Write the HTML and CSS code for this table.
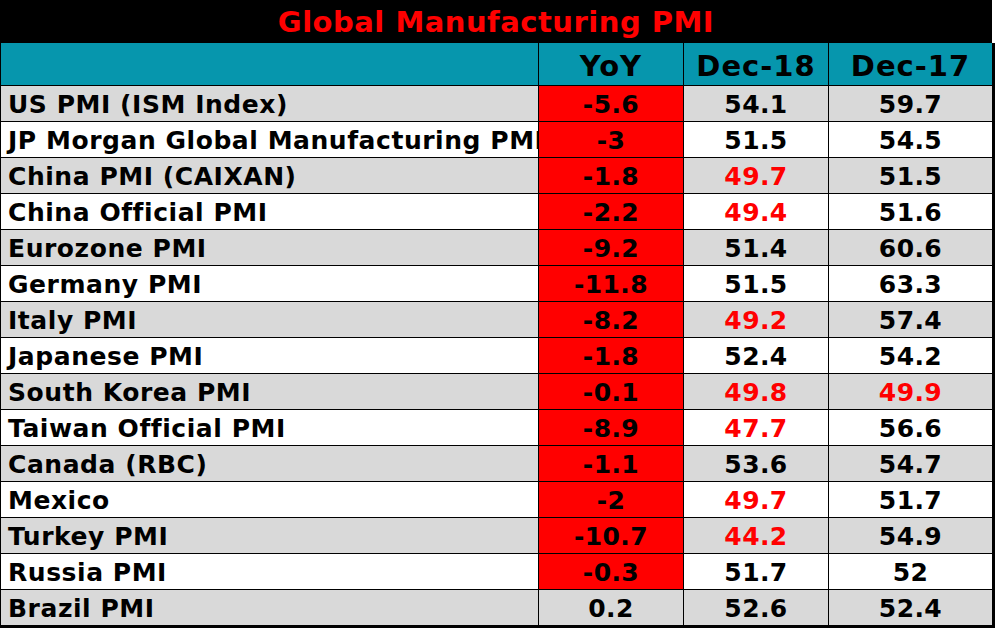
FILE: index.html
```html
<!DOCTYPE html>
<html>
<head>
<meta charset="utf-8">
<link rel="stylesheet" href="styles.css">
</head>
<body>
<div class="sheet">
  <div class="title">Global Manufacturing PMI</div>
  <div class="grid">
    <div class="hd"></div><div class="hd">YoY</div><div class="hd">Dec-18</div><div class="hd">Dec-17</div>

    <div class="nm g">US PMI (ISM Index)</div><div class="v neg">-5.6</div><div class="v g">54.1</div><div class="v g">59.7</div>
    <div class="nm">JP Morgan Global Manufacturing PMI</div><div class="v neg">-3</div><div class="v">51.5</div><div class="v">54.5</div>
    <div class="nm g">China PMI (CAIXAN)</div><div class="v neg">-1.8</div><div class="v g r">49.7</div><div class="v g">51.5</div>
    <div class="nm">China Official PMI</div><div class="v neg">-2.2</div><div class="v r">49.4</div><div class="v">51.6</div>
    <div class="nm g">Eurozone PMI</div><div class="v neg">-9.2</div><div class="v g">51.4</div><div class="v g">60.6</div>
    <div class="nm">Germany PMI</div><div class="v neg">-11.8</div><div class="v">51.5</div><div class="v">63.3</div>
    <div class="nm g">Italy PMI</div><div class="v neg">-8.2</div><div class="v g r">49.2</div><div class="v g">57.4</div>
    <div class="nm">Japanese PMI</div><div class="v neg">-1.8</div><div class="v">52.4</div><div class="v">54.2</div>
    <div class="nm g">South Korea PMI</div><div class="v neg">-0.1</div><div class="v g r">49.8</div><div class="v g r">49.9</div>
    <div class="nm">Taiwan Official PMI</div><div class="v neg">-8.9</div><div class="v r">47.7</div><div class="v">56.6</div>
    <div class="nm g">Canada (RBC)</div><div class="v neg">-1.1</div><div class="v g">53.6</div><div class="v g">54.7</div>
    <div class="nm">Mexico</div><div class="v neg">-2</div><div class="v r">49.7</div><div class="v">51.7</div>
    <div class="nm g">Turkey PMI</div><div class="v neg">-10.7</div><div class="v g r">44.2</div><div class="v g">54.9</div>
    <div class="nm">Russia PMI</div><div class="v neg">-0.3</div><div class="v">51.7</div><div class="v">52</div>
    <div class="nm g">Brazil PMI</div><div class="v g">0.2</div><div class="v g">52.6</div><div class="v g">52.4</div>
  </div>
</div>
</body>
</html>
```

FILE: styles.css
```css
html, body {
  margin: 0;
  padding: 0;
  background: #ffffff;
}
.sheet {
  width: 995px;
  font-family: "DejaVu Sans", "Liberation Sans", sans-serif;
  font-weight: 700;
}
.title {
  width: 992px;
  height: 43px;
  background: #000000;
  color: #ff0000;
  font-size: 29px;
  letter-spacing: 0.5px;
  line-height: 45px;
  text-align: center;
}
.grid {
  display: grid;
  grid-template-columns: 537px 144px 144px 163px;
  grid-template-rows: 42px;
  grid-auto-rows: 35px;
  gap: 1px;
  background: #000000;
  border-left: 1px solid #000000;
  border-right: 3px solid #000000;
  border-bottom: 3px solid #000000;
  width: 991px;
}
.grid > div {
  background: #ffffff;
  color: #000000;
  font-size: 25px;
  letter-spacing: 0.4px;
  line-height: 37px;
  white-space: nowrap;
  overflow: hidden;
}
.grid > .hd {
  background: #0696ad;
  font-size: 29px;
  letter-spacing: 1px;
  line-height: 46px;
  text-align: center;
}
.grid > .nm {
  padding-left: 7px;
  letter-spacing: 0.55px;
}
.grid > .v {
  text-align: center;
}
.grid > .g {
  background: #d9d9d9;
}
.grid > .neg {
  background: #ff0000;
}
.grid > .r {
  color: #ff0000;
}
```
